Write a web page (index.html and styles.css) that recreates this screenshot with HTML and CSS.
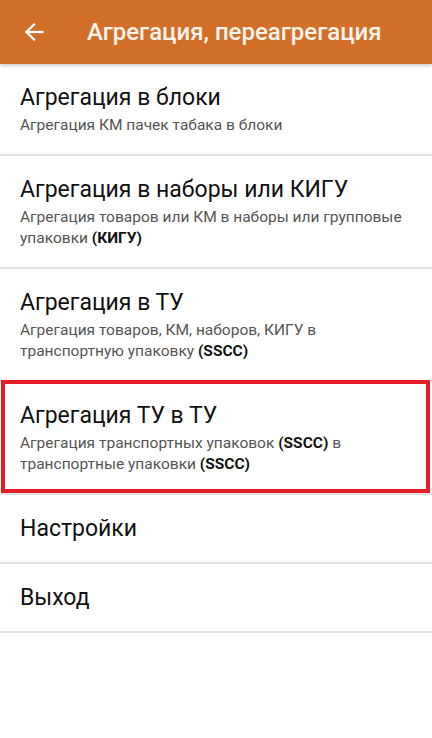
FILE: index.html
```html
<!DOCTYPE html>
<html lang="ru">
<head>
  <meta charset="UTF-8">
  <meta name="viewport" content="width=device-width, initial-scale=1.0">
  <title>Агрегация, переагрегация</title>
  <link rel="stylesheet" href="styles.css">
</head>
<body>

<!-- ШАПКА -->
<header class="toolbar">
  <button class="back" aria-label="Назад">
    <svg width="20" height="20" viewBox="0 0 20 20" fill="none" stroke="#fff" stroke-width="2.2" stroke-linecap="square">
      <path d="M2.5 10H18.5"/>
      <path d="M10 2.5L2.5 10L10 17.5"/>
    </svg>
  </button>
  <h1>Агрегация, переагрегация</h1>
</header>

<!-- МЕНЮ -->
<ul class="menu">
  <li class="item">
    <div class="title">Агрегация в блоки</div>
    <div class="sub">Агрегация КМ пачек табака в блоки</div>
  </li>
  <li class="item">
    <div class="title">Агрегация в наборы или КИГУ</div>
    <div class="sub">Агрегация товаров или КМ в наборы или групповые<br>упаковки <b>(КИГУ)</b></div>
  </li>
  <li class="item">
    <div class="title">Агрегация в ТУ</div>
    <div class="sub">Агрегация товаров, КМ, наборов, КИГУ в<br>транспортную упаковку <b>(SSCC)</b></div>
  </li>
  <li class="item selected">
    <div class="title">Агрегация ТУ в ТУ</div>
    <div class="sub">Агрегация транспортных упаковок <b>(SSCC)</b> в<br>транспортные упаковки <b>(SSCC)</b></div>
  </li>
  <li class="item">
    <div class="title">Настройки</div>
  </li>
  <li class="item">
    <div class="title">Выход</div>
  </li>
</ul>

</body>
</html>
```

FILE: styles.css
```css
* { margin: 0; padding: 0; box-sizing: border-box; }

body {
  font-family: Roboto, 'Noto Sans', sans-serif;
  background-color: #fff;
  color: #111;
}

.toolbar {
  height: 64px;
  background-color: #d2702a;
  display: flex;
  align-items: center;
  padding-left: 22px;
  box-shadow: 0 2px 3px rgba(0, 0, 0, 0.18);
  position: relative;
}

.back {
  width: 24px;
  height: 24px;
  background: none;
  border: none;
  display: flex;
  align-items: center;
  justify-content: center;
  margin-right: 41px;
}

.toolbar h1 {
  color: #fbf3ec;
  font-size: 24px;
  font-weight: 500;
  white-space: nowrap;
}

.menu { list-style: none; }

.item {
  padding: 18px 20px;
  border-bottom: 2px solid #e3e3e3;
  position: relative;
}

.item .title {
  font-size: 23px;
  line-height: 31px;
  color: #111;
}

.item .sub {
  margin-top: 2px;
  font-size: 15.5px;
  line-height: 21px;
  color: #555;
  white-space: nowrap;
}

.item .sub b { color: #111; font-weight: 700; }

.item.selected::after {
  content: "";
  position: absolute;
  left: 1px;
  right: 2px;
  top: -2px;
  bottom: 0;
  border: 4px solid #e31e26;
}
```
